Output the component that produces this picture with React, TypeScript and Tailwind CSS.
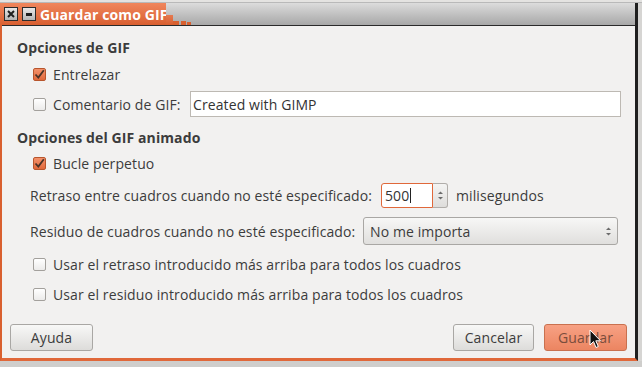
/**
 * "Guardar como GIF" export dialog (Ubuntu/GIMP look).
 */

const font = { fontFamily: '"Open Sans", "Noto Sans", sans-serif', letterSpacing: "0.1px" };

function CheckBox({ checked }: { checked?: boolean }) {
  if (checked) {
    return (
      <div className="flex h-[13px] w-[13px] flex-shrink-0 items-center justify-center rounded-[2px] border border-[#b8552c] bg-gradient-to-b from-[#f3916a] to-[#e0683a]">
        <svg width="11" height="11" viewBox="0 0 11 11">
          <path d="M1.5 5.5 L4.3 8.5 L9.8 1.2" fill="none" stroke="#4a3327" strokeWidth="1.8" />
        </svg>
      </div>
    );
  }
  return (
    <div className="h-[13px] w-[13px] flex-shrink-0 rounded-[2px] border border-[#a3a09c] bg-gradient-to-b from-[#ffffff] to-[#ecebea]" />
  );
}

function CheckRow({ label, checked, className }: { label: string; checked?: boolean; className?: string }) {
  return (
    <div className={`flex h-[20px] items-center pl-[31px] ${className ?? ""}`}>
      <CheckBox checked={checked} />
      <span className="ml-[7px] whitespace-nowrap text-[14px] text-[#3c3c3c]">{label}</span>
    </div>
  );
}

function UpDown() {
  return (
    <svg width="7" height="11" viewBox="0 0 7 11">
      <path d="M1 4 L3.5 1.5 L6 4 Z" fill="#6b6b6b" />
      <path d="M1 7 L3.5 9.5 L6 7 Z" fill="#6b6b6b" />
    </svg>
  );
}

function Button({ label, primary }: { label: string; primary?: boolean }) {
  return (
    <div
      className={`flex h-[27px] items-center justify-center rounded-[3px] border text-[14px] ${
        primary
          ? "border-[#c9714f] bg-gradient-to-b from-[#f7a184] to-[#ec8561] text-[#7a4d3c]"
          : "border-[#a9a7a4] bg-gradient-to-b from-[#f8f8f7] to-[#dddcda] text-[#3c3c3c]"
      }`}
    >
      {label}
    </div>
  );
}

export default function App() {
  return (
    <div className="flex h-[367px] w-[642px] flex-col bg-[#d6d5d3]" style={font}>
      <div className="h-[3px] border-b border-[#b9b9b9] bg-[#e4e3e1]" />
      <div className="flex w-[638px] flex-col">
        {/* title bar */}
        <div className="relative flex h-[22px]">
          <div className="flex w-[166px] flex-shrink-0 items-center bg-gradient-to-b from-[#f0865c] to-[#d95f30] pl-[4px]">
            <div className="flex h-[14px] w-[14px] flex-shrink-0 items-center justify-center border border-[#2c2c2c] bg-gradient-to-b from-[#e9e9e9] to-[#b5b5b5]">
              <svg width="8" height="8" viewBox="0 0 8 8">
                <path d="M1 1 L7 7 M7 1 L1 7" stroke="#1f1f1f" strokeWidth="2" />
              </svg>
            </div>
            <div className="ml-[4px] flex h-[14px] w-[14px] flex-shrink-0 items-center justify-center border border-[#2c2c2c] bg-gradient-to-b from-[#e9e9e9] to-[#b5b5b5]">
              <div className="h-[3px] w-[6px] bg-[#1f1f1f]" />
            </div>
            <span className="ml-[4px] whitespace-nowrap text-[14px] font-bold text-white">Guardar como GIF</span>
          </div>
          <div className="flex-1 border-r-[3px] border-[#1f1f1f] bg-gradient-to-b from-[#dcdcdc] to-[#a8a8a8]" />
          <div className="absolute left-[166px] top-[12px] h-[10px] w-[7px] bg-gradient-to-b from-[#e57a50] to-[#d95f30]" />
          <div className="absolute left-[173px] top-[18px] h-[4px] w-[6px] bg-[#d9602f]" />
          <div className="absolute left-[181px] top-[18px] h-[4px] w-[5px] bg-[#d9602f]" />
          <div className="absolute left-[187px] top-[19px] h-[3px] w-[4px] bg-[#d9602f]" />
        </div>
        {/* body */}
        <div className="flex h-[336px] border-b-[3px] border-l-[2px] border-r-[3px] border-b-[#e0683a] border-l-[#d9602f] border-r-[#1f1f1f] bg-[#f2f1f0]">
          <div className="flex flex-1 flex-col border-t border-[#2a2a2a] pt-[11px]">
            <div className="flex h-[20px] items-center pl-[15px] text-[14px] font-bold text-[#3c3c3c]">Opciones de GIF</div>
            <CheckRow className="mt-[7px]" label="Entrelazar" checked />
            <div className="mt-[7px] flex h-[26px] items-center pl-[31px]">
              <CheckBox />
              <span className="ml-[7px] w-[137px] flex-shrink-0 whitespace-nowrap text-[14px] text-[#3c3c3c]">Comentario de GIF:</span>
              <div className="flex h-[26px] w-[431px] items-center border border-[#bdb9b3] bg-white pl-[2px] text-[14px] text-[#333333]">
                Created with GIMP
              </div>
            </div>
            <div className="mt-[10px] flex h-[20px] items-center pl-[15px] text-[14px] font-bold text-[#3c3c3c]">Opciones del GIF animado</div>
            <CheckRow className="mt-[6px]" label="Bucle perpetuo" checked />
            <div className="mt-[10px] flex h-[25px] items-center whitespace-nowrap pl-[28px] text-[14px] text-[#3c3c3c]">
              <span className="w-[351px] flex-shrink-0">Retraso entre cuadros cuando no esté especificado:</span>
              <div className="flex h-[25px] w-[52px] items-center rounded-l-[3px] border border-[#e0683a] bg-white pl-[3px] text-[#333333]">
                500
                <div className="ml-[1px] h-[15px] w-[1px] bg-[#222222]" />
              </div>
              <div className="flex h-[25px] w-[15px] items-center justify-center rounded-r-[3px] border border-l-0 border-[#b0ada9] bg-gradient-to-b from-[#f4f4f3] to-[#dedddb]">
                <UpDown />
              </div>
              <span className="ml-[8px]">milisegundos</span>
            </div>
            <div className="mt-[9px] flex h-[28px] items-center whitespace-nowrap pl-[28px] text-[14px] text-[#3c3c3c]">
              <span className="w-[333px] flex-shrink-0">Residuo de cuadros cuando no esté especificado:</span>
              <div className="flex h-[28px] w-[255px] items-center justify-between rounded-[3px] border border-[#a9a7a4] bg-gradient-to-b from-[#f7f7f6] to-[#e0dfdd] pl-[6px] pr-[5px]">
                <span>No me importa</span>
                <UpDown />
              </div>
            </div>
            <CheckRow className="mt-[9px]" label="Usar el retraso introducido más arriba para todos los cuadros" />
            <CheckRow className="mt-[10px]" label="Usar el residuo introducido más arriba para todos los cuadros" />
            <div className="relative mt-[20px] flex items-center pl-[8px] pr-[8px]">
              <div className="w-[83px]">
                <Button label="Ayuda" />
              </div>
              <div className="ml-auto w-[81px]">
                <Button label="Cancelar" />
              </div>
              <div className="ml-[10px] w-[83px]">
                <Button label="Guardar" primary />
              </div>
              <svg className="absolute left-[587px] top-[5px]" width="13" height="20" viewBox="0 0 13 20">
                <path d="M1 1 L1 16 L4.5 12.5 L7 18.5 L9.3 17.5 L6.8 11.8 L11.5 11.8 Z" fill="#111111" stroke="#ffffff" strokeWidth="1" />
              </svg>
            </div>
          </div>
        </div>
      </div>
      <div className="flex-1 bg-[#cfcecc]" />
    </div>
  );
}
